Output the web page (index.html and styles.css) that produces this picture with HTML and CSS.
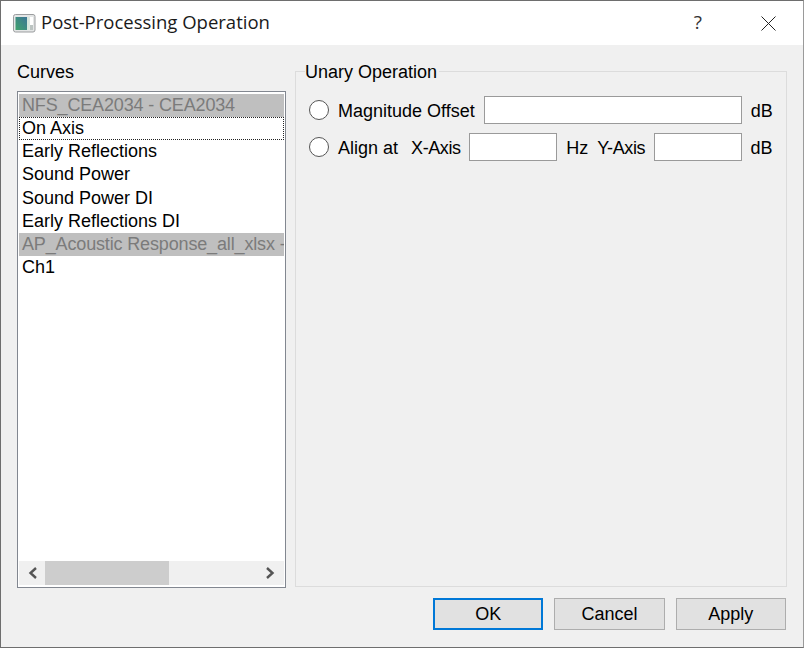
FILE: index.html
```html
<!DOCTYPE html>
<html lang="en">
<head>
    <meta charset="UTF-8">
    <title>Post-Processing Operation</title>
    <link rel="stylesheet" href="styles.css">
</head>
<body>
    <div class="window">
        <div class="titlebar">
            <svg class="app-icon" width="23" height="19" viewBox="0 0 23 19">
                <defs>
                    <linearGradient id="plot" x1="0" y1="1" x2="1" y2="0">
                        <stop offset="0" stop-color="#3fa36c"/>
                        <stop offset="1" stop-color="#3c7596"/>
                    </linearGradient>
                </defs>
                <rect x="0.5" y="0.5" width="21.5" height="17.5" rx="2" fill="#e4e6e6" stroke="#9b9d9f"/>
                <rect x="2.5" y="3" width="11.5" height="13" fill="url(#plot)"/>
                <rect x="14" y="3" width="2.5" height="13" fill="#d5e6dc"/>
                <rect x="17" y="3" width="3" height="8" fill="#ffffff"/>
                <rect x="17" y="11" width="3" height="5" fill="#bcc4c2"/>
            </svg>
            <span class="title">Post-Processing Operation</span>
            <span class="help">?</span>
            <svg class="close" width="15" height="15" viewBox="0 0 15 15">
                <path d="M0.5 0.5L14.5 14.5M14.5 0.5L0.5 14.5" stroke="#222" stroke-width="1" fill="none"/>
            </svg>
        </div>
        <div class="content">
            <div class="main">
                <div class="curves">
                    <div class="curves-label">Curves</div>
                    <div class="listbox">
                        <div class="items">
                            <div class="item group">NFS_CEA2034 - CEA2034</div>
                            <div class="item current">On Axis</div>
                            <div class="item">Early Reflections</div>
                            <div class="item">Sound Power</div>
                            <div class="item">Sound Power DI</div>
                            <div class="item">Early Reflections DI</div>
                            <div class="item group">AP_Acoustic Response_all_xlsx - Acoustic</div>
                            <div class="item">Ch1</div>
                        </div>
                        <div class="scrollbar">
                            <svg class="arrow" width="26" height="24" viewBox="0 0 26 24">
                                <path d="M17 7L11.5 12L17 17" stroke="#555" stroke-width="2.4" fill="none"/>
                            </svg>
                            <div class="track"><div class="thumb"></div></div>
                            <svg class="arrow" width="26" height="24" viewBox="0 0 26 24">
                                <path d="M9 7L14.5 12L9 17" stroke="#555" stroke-width="2.4" fill="none"/>
                            </svg>
                        </div>
                    </div>
                </div>
                <fieldset class="unary">
                    <legend>Unary Operation</legend>
                    <div class="op-row">
                        <span class="radio"></span>
                        <span class="op-label">Magnitude Offset</span>
                        <span class="field field-wide"></span>
                        <span class="unit">dB</span>
                    </div>
                    <div class="op-row">
                        <span class="radio"></span>
                        <span class="op-label">Align at</span>
                        <span class="axis-label">X-Axis</span>
                        <span class="field"></span>
                        <span class="unit">Hz</span>
                        <span class="axis-label axis-label-y">Y-Axis</span>
                        <span class="field"></span>
                        <span class="unit">dB</span>
                    </div>
                </fieldset>
            </div>
            <div class="buttons">
                <button class="btn btn-default">OK</button>
                <button class="btn">Cancel</button>
                <button class="btn">Apply</button>
            </div>
        </div>
    </div>
</body>
</html>
```

FILE: styles.css
```css
html, body {
    margin: 0;
    padding: 0;
}
body {
    font-family: "Liberation Sans", Arial, sans-serif;
    font-size: 18px;
    color: #000;
    background-color: #f0f0f0;
}
.window {
    width: 804px;
    height: 648px;
    box-sizing: border-box;
    border: 1px solid #6e6e6e;
    border-right-color: #9a9a9a;
    display: flex;
    flex-direction: column;
    overflow: hidden;
}
.titlebar {
    height: 44px;
    flex: none;
    background-color: #fff;
    display: flex;
    align-items: center;
    padding-left: 12px;
}
.app-icon {
    flex: none;
    margin-right: 5px;
}
.title {
    font-family: "Open Sans", sans-serif;
    font-size: 18.5px;
    line-height: 24px;
    margin-bottom: 2px;
    color: #1a1a1a;
    flex: 1;
}
.help {
    font-family: "Open Sans", sans-serif;
    font-size: 19px;
    line-height: 24px;
    margin-bottom: 2px;
    color: #333;
    margin-right: 59px;
}
.close {
    margin-right: 27px;
}
.content {
    flex: 1;
    min-height: 0;
    display: flex;
    flex-direction: column;
    padding: 16px 16px 17px 16px;
}
.main {
    flex: 1;
    min-height: 0;
    display: flex;
    gap: 9px;
}
.curves {
    width: 269px;
    display: flex;
    flex-direction: column;
}
.curves-label {
    height: 30px;
    line-height: 22px;
}
.listbox {
    flex: 1;
    min-height: 0;
    box-sizing: border-box;
    border: 1px solid #828790;
    background-color: #fff;
    padding: 2px 1px;
    display: flex;
    flex-direction: column;
}
.items {
    flex: 1;
    min-height: 0;
    overflow: hidden;
}
.item {
    height: 23.15px;
    line-height: 23px;
    padding-left: 3px;
    white-space: nowrap;
    overflow: hidden;
}
.item.group {
    background-color: #bfbfbf;
    color: #7b7b7b;
    letter-spacing: -0.15px;
}
.item.current {
    outline: 1px dotted #222;
    outline-offset: -1px;
}
.scrollbar {
    height: 24px;
    flex: none;
    background-color: #f0f0f0;
    display: flex;
}
.arrow {
    flex: none;
}
.track {
    flex: 1;
}
.thumb {
    width: 124px;
    height: 100%;
    background-color: #cdcdcd;
}
.unary {
    flex: 1;
    min-width: 0;
    margin: 0;
    margin-top: -2px;
    margin-bottom: 1px;
    padding: 13px 13px 0 13px;
    border: 1px solid #dcdcdc;
}
.unary legend {
    padding: 2px 2px 0 0;
    margin-left: -4px;
    line-height: 22px;
}
.op-row {
    display: flex;
    align-items: center;
    height: 28px;
    margin-bottom: 9px;
    white-space: nowrap;
}
.radio {
    width: 18px;
    height: 18px;
    flex: none;
    border: 1px solid #555;
    border-radius: 50%;
    background-color: #fff;
    margin-right: 9px;
}
.op-label {
    margin-right: 9px;
    padding-top: 2px;
}
.axis-label {
    margin-left: 4px;
    margin-right: 8.5px;
    padding-top: 2px;
    letter-spacing: -0.4px;
}
.axis-label-y {
    margin-left: 9px;
}
.field {
    width: 86px;
    height: 26px;
    flex: none;
    border: 1px solid #9a9a9a;
    background-color: #fff;
}
.field-wide {
    width: 256px;
}
.unit {
    margin-left: 9px;
    padding-top: 2px;
}
.buttons {
    flex: none;
    display: flex;
    justify-content: flex-end;
    gap: 11px;
    padding-top: 10px;
    padding-right: 1px;
}
.btn {
    width: 110.33px;
    height: 32px;
    box-sizing: border-box;
    font-family: inherit;
    font-size: 18px;
    color: #000;
    background-color: #e1e1e1;
    border: 1px solid #adadad;
    padding: 0;
}
.btn-default {
    border: 2px solid #0078d7;
}
```
